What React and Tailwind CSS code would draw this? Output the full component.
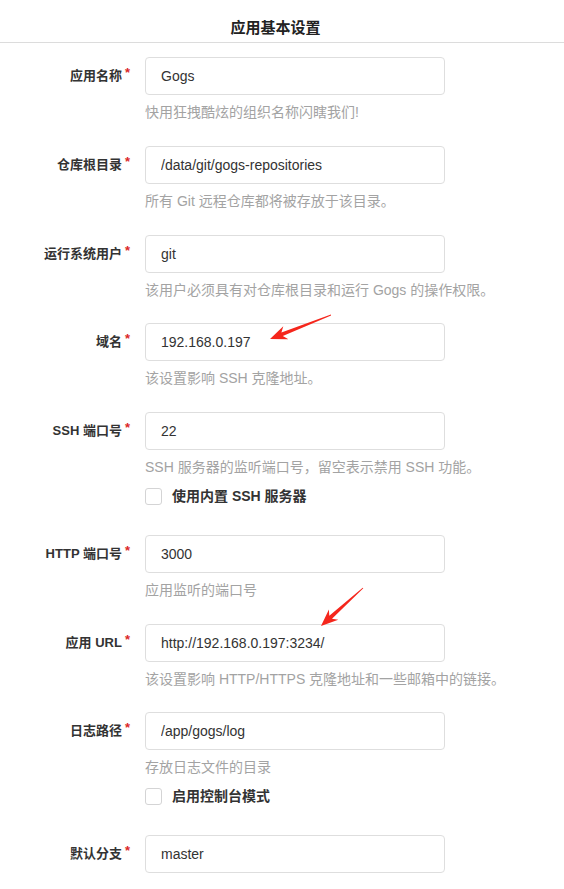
import React from "react";

const fields = [
  { label: "应用名称", value: "Gogs", help: "快用狂拽酷炫的组织名称闪瞎我们!" },
  { label: "仓库根目录", value: "/data/git/gogs-repositories", help: "所有 Git 远程仓库都将被存放于该目录。" },
  { label: "运行系统用户", value: "git", help: "该用户必须具有对仓库根目录和运行 Gogs 的操作权限。" },
  { label: "域名", value: "192.168.0.197", help: "该设置影响 SSH 克隆地址。" },
  { label: "SSH 端口号", value: "22", help: "SSH 服务器的监听端口号，留空表示禁用 SSH 功能。", check: "使用内置 SSH 服务器" },
  { label: "HTTP 端口号", value: "3000", help: "应用监听的端口号" },
  { label: "应用 URL", value: "http://192.168.0.197:3234/", help: "该设置影响 HTTP/HTTPS 克隆地址和一些邮箱中的链接。" },
  { label: "日志路径", value: "/app/gogs/log", help: "存放日志文件的目录", check: "启用控制台模式" },
  { label: "默认分支", value: "master" },
];

// tapered red annotation arrow, tail -> tip
function arrowPoints(tail, tip) {
  const dx = tip[0] - tail[0];
  const dy = tip[1] - tail[1];
  const len = Math.hypot(dx, dy);
  const ux = dx / len;
  const uy = dy / len;
  const nx = -uy;
  const ny = ux;
  const head = 17;
  const bx = tip[0] - ux * head;
  const by = tip[1] - uy * head;
  const nbx = tip[0] - ux * (head - 4);
  const nby = tip[1] - uy * (head - 4);
  const pts = [
    [tail[0] + nx * 0.4, tail[1] + ny * 0.4],
    [nbx + nx * 2, nby + ny * 2],
    [bx + nx * 7, by + ny * 7],
    tip,
    [bx - nx * 7, by - ny * 7],
    [nbx - nx * 2, nby - ny * 2],
    [tail[0] - nx * 0.4, tail[1] - ny * 0.4],
  ];
  return pts.map((p) => `${p[0].toFixed(1)},${p[1].toFixed(1)}`).join(" ");
}

function Field({ field }) {
  return (
    <div className="pb-[23.75px]">
      <div className="flex h-[38px] items-center">
        <div className="w-[130px] text-right text-[13px] font-bold leading-[20px] text-[#333]">
          {field.label}
          <span className="relative -top-[3px] ml-[3px] text-[#db2828]">*</span>
        </div>
        <input
          readOnly
          value={field.value}
          className="ml-[15px] h-[38px] w-[300px] rounded-[4px] border border-[#dedede] bg-white px-[15px] text-[14px] text-[#333] outline-none"
        />
      </div>
      {field.help && (
        <div className="ml-[145px] mt-[7px] h-[20px] text-[14px] leading-[20px] text-[#a3a3a3]">{field.help}</div>
      )}
      {field.check && (
        <div className="ml-[145px] pb-[5px] pt-[9px]">
          <div className="flex h-[20px] items-center gap-[10px]">
            <span className="h-[17px] w-[17px] rounded-[3px] border border-[#d4d4d5] bg-white" />
            <span className="text-[14px] font-bold text-[#333]">{field.check}</span>
          </div>
        </div>
      )}
    </div>
  );
}

export default function App() {
  return (
    <div
      className="relative min-h-[889px] w-[564px] bg-white"
      style={{ fontFamily: '"Liberation Sans", "Noto Sans CJK SC", sans-serif' }}
    >
      <div className="h-[43px] border-b border-[#dcdcdc] pr-[13px] pt-[18px] text-center text-[15px] font-bold leading-[20px] text-[#222]">
        应用基本设置
      </div>
      <div className="pt-[14px]">
        {fields.map((f) => (
          <Field key={f.label} field={f} />
        ))}
      </div>
      <svg className="pointer-events-none absolute left-0 top-0" width="564" height="889">
        <polygon points={arrowPoints([331, 315], [270, 339])} fill="#f5261c" />
        <polygon points={arrowPoints([363, 588], [321, 626])} fill="#f5261c" />
      </svg>
    </div>
  );
}
